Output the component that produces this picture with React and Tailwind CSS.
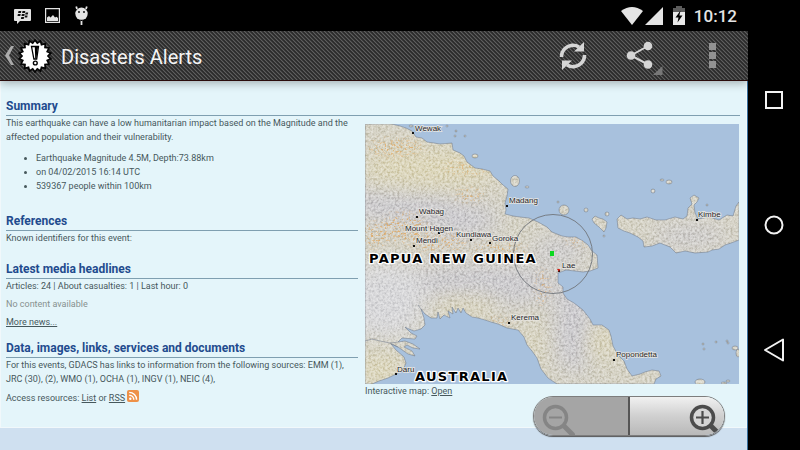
import React from "react";

const mainland =
  "M365 124H392L400 126 406 128 412 131 416 137 422 138 427 142 434 143 440 144 452 143 453 150 460 153 464 156 467 162 475 168 482 169 490 171 493 176 499 181 503 185 508 189 507 196 505 203 506 210 505 214 513 216 520 217 529 218 538 222 547 227 552 232 562 236 568 237 576 237 583 241 588 245 592 251 597 255 598 268 590 271 583 272 575 271 566 270 558 273 558 283 563 287 563 293 567 299 574 303 583 310 590 319 593 325 602 325 609 330 611 336 613 346 618 355 624 361 627 369 632 376 640 374 645 372 652 370 659 371 661 376 656 379 654 384H557L548 378 541 369 537 358 532 351 527 345 524 337 518 330 507 328 498 324 491 322 485 320 478 318 472 317 466 313 463 308 461 313 458 308 456 313 452 307 453 314 448 311 450 318 444 315 440 319 438 312 437 318 431 318 425 314 421 309 424 318 425 325 421 329 414 331 409 329 405 327 411 333 417 336 415 339 402 338 398 342 405 341 413 344 420 349 413 348 407 345 404 347 412 351 415 356 408 354 398 347 391 344 396 350 404 357 406 363 403 370 396 374 388 378 379 381 372 384H365Z";
const newBritain =
  "M617 219L621 215 627 219 633 218 640 219 647 217 656 220 665 220 675 217 683 219 687 216 688 208 692 204 690 198 694 195 699 198 697 202 694 205 695 213 698 219 709 217 719 220 727 215 733 216 736 206 739 202V240L731 243 725 245 719 249 712 250 708 252 695 253 685 251 676 253 670 247 660 243 652 246 644 247 643 241 638 237 630 233 624 231 618 228Z";
const offshore = "M592 219L595 216 599 218 603 219 607 222 606 228 604 232 599 227 594 223Z";
const islands = [
  [475, 156, 3, 2], [456, 131, 1, 1], [455, 136, 1, 1], [465, 136, 1, 1], [447, 126, 1, 1], [411, 126, 2, 1],
  [515, 181, 4.5, 5.5], [527, 187, 2, 1], [558, 202, 1, 1], [564, 210, 5, 5], [586, 210, 2, 2], [607, 214, 2, 2],
  [604, 236, 1, 1], [662, 180, 2, 1], [669, 182, 3, 2], [653, 191, 2, 2],
  [707, 205, 1, 1], [700, 382, 5, 3], [735, 348, 3, 2], [738, 353, 2, 4], [727, 341, 1, 1], [728, 343, 1, 1],
  [704, 349, 1, 1], [703, 344, 1, 1], [716, 342, 1, 1], [724, 383, 3, 1], [728, 381, 2, 1],
];
const towns = [
  ["Wewak", 415, 131, 413, 133], ["Madang", 509, 203, 507, 206], ["Wabag", 419, 214, 417, 217],
  ["Mount Hagen", 405, 231, 439, 233], ["Kundiawa", 456, 237, 471, 240], ["Goroka", 492, 241, 490, 243],
  ["Mendi", 416, 243, 414, 246], ["Kimbe", 698, 217, 697, 220], ["Lae", 562, 268, 559, 271],
  ["Kerema", 511, 320, 509, 323], ["Popondetta", 616, 357, 614, 360], ["Daru", 397, 372, 396, 374],
];
const highlands = [
  [395, 148, 26, 8], [470, 195, 14, 5], [405, 228, 22, 14], [440, 243, 26, 8], [376, 235, 12, 12], [500, 250, 28, 6],
  [543, 287, 5, 18], [500, 323, 14, 3], [470, 168, 26, 5], [580, 240, 14, 4],
];

function ReliefMap() {
  return (
    <svg viewBox="365 124 374 260" className="block w-full" role="img" aria-label="Map of Papua New Guinea">
      <defs>
        <clipPath id="land">
          <path d={mainland} />
          <path d={newBritain} />
          <path d={offshore} />
          {islands.map(([x, y, rx, ry]) => <ellipse key={`${x}-${y}`} cx={x} cy={y} rx={rx} ry={ry} />)}
        </clipPath>
        <filter id="soft" x="-80%" y="-80%" width="260%" height="260%" colorInterpolationFilters="sRGB"><feGaussianBlur stdDeviation="11" /></filter>
        <filter id="relief" x="0" y="0" width="100%" height="100%" colorInterpolationFilters="sRGB">
          <feTurbulence type="fractalNoise" baseFrequency="0.42" numOctaves="3" seed="4" />
          <feColorMatrix values="1.9 0 0 0 -0.42  1.9 0 0 0 -0.42  1.9 0 0 0 -0.42  0 0 0 0 1" />
        </filter>
        <filter id="speckle" x="-10%" y="-10%" width="120%" height="120%" colorInterpolationFilters="sRGB">
          <feTurbulence type="fractalNoise" baseFrequency="0.45" numOctaves="2" seed="11" />
          <feColorMatrix values="0 0 0 0 0.88  0 0 0 0 0.62  0 0 0 0 0.3  7 0 0 0 -3.9" result="n" />
          <feGaussianBlur in="SourceGraphic" stdDeviation="4" result="s" />
          <feComposite in="n" in2="s" operator="in" />
        </filter>
      </defs>
      <rect x="365" y="124" width="374" height="260" fill="#a8c1dd" />
      <g clipPath="url(#land)">
        <rect x="365" y="124" width="374" height="260" fill="#d6d3c6" />
        <g fill="#cccbcf" filter="url(#soft)">
          <ellipse cx="400" cy="205" rx="60" ry="18" />
          <ellipse cx="460" cy="220" rx="40" ry="18" />
          <ellipse cx="480" cy="285" rx="80" ry="22" />
          <ellipse cx="575" cy="325" rx="22" ry="50" />
          <ellipse cx="560" cy="250" rx="30" ry="12" />
          <ellipse cx="690" cy="236" rx="40" ry="10" />
        </g>
        <g fill="#d8d8da" filter="url(#soft)">
          <ellipse cx="385" cy="300" rx="44" ry="40" />
        </g>
        <g fill="#dcd6ba" filter="url(#soft)">
          <ellipse cx="430" cy="168" rx="70" ry="20" />
          <ellipse cx="380" cy="370" rx="26" ry="16" />
          <ellipse cx="465" cy="307" rx="36" ry="9" />
          <ellipse cx="602" cy="342" rx="12" ry="20" />
          <ellipse cx="533" cy="345" rx="6" ry="24" />
        </g>
        <rect x="365" y="124" width="374" height="260" filter="url(#relief)" className="opacity-70 mix-blend-soft-light" />
        <g filter="url(#speckle)" className="opacity-70">
          {highlands.map(([x, y, rx, ry]) => <ellipse key={`${x}-${y}`} cx={x} cy={y} rx={rx} ry={ry} />)}
        </g>
      </g>
      <g fill="none" stroke="#6d7787" strokeWidth=".5">
        <path d={mainland} />
        <path d={newBritain} />
        <path d={offshore} />
        {islands.map(([x, y, rx, ry]) => <ellipse key={`${x}-${y}`} cx={x} cy={y} rx={rx} ry={ry} />)}
        <path d="M365 341L372 339 380 341 390 343 398 342M390 343L398 347M418 305L421 309" />
      </g>
      <circle cx="553" cy="254" r="39.500" fill="none" stroke="#70757a" strokeWidth=".9" />
      {towns.map(([name, x, y, dx, dy]) => (
        <g key={name}>
          <rect x={dx - 1} y={dy - 1} width="2" height="2" fill="#111" />
          <text x={x} y={y} className="font-['Liberation_Sans',sans-serif] text-[8px] [paint-order:stroke]" fill="#25252c" stroke="#e9e7e1" strokeWidth="1.500">{name}</text>
        </g>
      ))}
      <g className="font-['DejaVu_Sans',sans-serif] text-[13px] font-bold tracking-widest [paint-order:stroke]" fill="#000" stroke="#fff" strokeWidth="2.500" strokeLinejoin="round">
        <text x="369" y="263">PAPUA NEW GUINEA</text>
        <text x="415" y="381">AUSTRALIA</text>
      </g>
      <rect x="550" y="251" width="4" height="5" fill="#0bd91f" />
      <path d="M557 269l2 3 1-3z" fill="#d31a10" />
    </svg>
  );
}

function StatusBar() {
  return (
    <div className="flex h-[31px] items-center justify-between bg-black pl-[14px] pr-[11px] text-[#e4e4e4]">
      <div className="flex items-center gap-[14px]">
        <svg width="17" height="17" viewBox="0 0 17 17" className="mt-px" fill="currentColor">
          <path d="M1 1h15q1 0 1 1v10q0 1-1 1H6l-3 3v-3H1q-1 0-1-1V2q0-1 1-1z" />
          <path d="M4.500 3h2.800l-.4 1.900H4.100zM8.500 3h2.800l-.4 1.900H8.100zM3.900 6h2.800l-.4 1.900H3.500zM7.900 6h2.800l-.4 1.900H7.500zM11.600 4.600h2.600l-.4 1.900h-2.600zM11 7.600h2.600l-.4 1.900h-2.600zM7.300 9h2.800l-.4 1.900H6.900z" fill="#111" />
        </svg>
        <svg width="15" height="15" viewBox="0 0 15 15" fill="currentColor">
          <path d="M.6.600h13.800v13.800H.6z" fill="none" stroke="currentColor" strokeWidth="1.200" />
          <path d="M2 13V9.500l2-1.500 1.500 1.500L8 7l2 2.500 1.500-.8L13 10v3z" />
        </svg>
        <svg width="15" height="20" viewBox="0 0 15 20" fill="currentColor" className="mt-px">
          <circle cx="7.500" cy="7.800" r="6.200" />
          <path d="M3 3L2.200.500M12 3l.8-2.500M7.500 14v5" stroke="currentColor" strokeWidth="1.800" />
          <path d="M7.500 13.800v1.200" stroke="#000" strokeWidth="2" />
          <circle cx="5" cy="6" r=".9" fill="#000" /><circle cx="10" cy="6" r=".9" fill="#000" />
        </svg>
      </div>
      <div className="flex items-center">
        <svg width="22" height="18" viewBox="0 0 22 18" fill="currentColor"><path d="M0 4Q11-4 22 4L11 18z" /></svg>
        <svg width="18" height="18" viewBox="0 0 18 18" fill="currentColor" className="ml-0.5"><path d="M18 0v18H0z" /></svg>
        <svg width="12" height="19" viewBox="0 0 12 19" className="ml-[10px]">
          <path d="M3 0h6v2h3v4H0V2h3z" fill="#5c5c5c" /><path d="M0 6h12v13H0z" fill="#e8e8e8" />
          <path d="M7.500 4.500L2.500 11.500h3l-1 5 5-7H6.400z" fill="#000" />
        </svg>
        <span className="ml-[9px] text-[17px] font-medium leading-5">10:12</span>
      </div>
    </div>
  );
}

const burst = Array.from({ length: 36 }, (_, i) => {
  const r = i % 2 ? 13 : 16;
  const a = (i * Math.PI) / 18;
  return `${(17 + r * Math.sin(a)).toFixed(1)},${(17 - r * Math.cos(a)).toFixed(1)}`;
}).join(" ");

function ActionBar() {
  return (
    <header className="relative z-10 flex h-[50px] items-center border-b border-[#2a0b0b] bg-[#2b2b2b] bg-[linear-gradient(45deg,#5e5e5e_4%,#2b2b2b_18%_36%,#5e5e5e_46%_54%,#2b2b2b_68%_86%,#5e5e5e_96%)] bg-[length:4px_4px] pl-[5px] pr-5 shadow-[0_2px_9px_rgba(0,0,0,0.3)]">
      <button aria-label="Back" className="flex items-center">
        <svg width="9" height="19" viewBox="0 0 9 19" fill="#ababab"><path d="M6 0h3L4 9.500l5 9.500H6L0 9.500z" /></svg>
        <svg width="34" height="34" viewBox="0 0 34 34" className="ml-1">
          <polygon points={burst} fill="#fff" stroke="#050505" strokeWidth="1.700" />
          <path d="M13.500 7.500h7l-1.800 12.500h-2.800z" fill="#fff" stroke="#000" strokeWidth="1.300" />
          <path d="M16.800 8h3.200l-1.600 11.500h-1.200z" fill="#000" />
          <circle cx="17.300" cy="24" r="1.900" fill="#fff" stroke="#000" strokeWidth="1.400" />
        </svg>
      </button>
      <h1 className="ml-[9px] flex-1 pt-0.5 text-[20px] leading-6 text-[#f5f5f5]">Disasters Alerts</h1>
      <button aria-label="Refresh">
        <svg width="30" height="30" viewBox="0 0 30 30" fill="none" stroke="#d5d5d5" strokeWidth="3.600">
          <path d="M3.500 16A11.500 11.500 0 0 1 7 7.500 11.500 11.500 0 0 1 21 6M26.500 14A11.500 11.500 0 0 1 23 22.500 11.500 11.500 0 0 1 9 24" />
          <path d="M26 1v9.500H16zM4 29v-9.500h10z" fill="#d5d5d5" stroke="none" />
        </svg>
      </button>
      <button aria-label="Share" className="ml-[37px]">
        <svg width="38" height="38" viewBox="0 0 38 38" fill="#d5d5d5">
          <path d="M23 9L6 18.500 23 27.500" fill="none" stroke="#d5d5d5" strokeWidth="2" />
          <circle cx="23" cy="9" r="4.300" /><circle cx="6" cy="18.500" r="4.300" /><circle cx="23" cy="27.500" r="4.300" />
          <path d="M37.500 29v9.500h-10z" fill="#777" />
        </svg>
      </button>
      <button aria-label="More options" className="ml-[35px]">
        <svg width="30" height="30" viewBox="0 0 30 30" fill="#929292"><path d="M11 2h7v7h-7zM11 11h7v7h-7zM11 20h7v7h-7z" /></svg>
      </button>
    </header>
  );
}

function Heading({ children, className = "" }) {
  return <h2 className={`border-b border-[#7f9fb0] text-[12px] font-bold leading-[18px] text-[#1f4b8e] ${className}`}>{children}</h2>;
}

function Lens({ plus }) {
  return (
    <svg width="34" height="34" viewBox="0 0 34 34" fill="none" stroke={plus ? "#4c4c4c" : "#858585"} className="shrink-0">
      <path d="M22 22l12 12" strokeWidth="5" />
      <circle cx="14.500" cy="14.500" r="11" strokeWidth="3.500" fill={plus ? "#d6d6d6" : "none"} />
      <path d={plus ? "M8 14.500h13M14.500 8v13" : "M8 14.500h13"} strokeWidth="2.200" />
    </svg>
  );
}

function ZoomControls() {
  return (
    <div className="absolute bottom-[14px] right-[22px] flex h-10 w-48 overflow-hidden rounded-full border border-[#7d7d7d] shadow-[0_1px_1px_#555]">
      <button disabled aria-label="Zoom out" className="flex w-24 items-start border-r-2 border-[#555] bg-[#a5a5a5] pl-[7px] pt-[6px]"><Lens /></button>
      <button aria-label="Zoom in" className="flex flex-1 items-start justify-end bg-linear-to-b from-[#f1f1f1] via-[#d0d0d0] via-50% to-[#b9b9b9] pr-0.5 pt-[6px]"><Lens plus /></button>
    </div>
  );
}

export default function App() {
  return (
    <div className="flex min-h-screen bg-black font-[Roboto,sans-serif]">
      <div className="flex min-w-0 flex-1 flex-col">
        <StatusBar />
        <ActionBar />
        <main className="relative flex flex-1 flex-col border-r border-[#39719f] bg-[#cfe0f0] pb-[22px] text-[9px] leading-[14px] text-[#46585c]">
          <div className="flex-1 border-x border-b border-[#f1f8fb] bg-[#e4f5fa] pb-5 pl-[5px] pr-[6px] pt-4">
            <Heading>Summary</Heading>
            <div className="grid grid-cols-[352fr_374fr] gap-[7px] pr-px">
              <section>
                <p>This earthquake can have a low humanitarian impact based on the Magnitude and the affected population and their vulnerability.</p>
                <ul className="mt-[7px] list-disc pl-[30px]">
                  <li>Earthquake Magnitude 4.5M, Depth:73.88km</li>
                  <li>on 04/02/2015 16:14 UTC</li>
                  <li>539367 people within 100km</li>
                </ul>
                <Heading className="mt-[19px]">References</Heading>
                <p>Known identifiers for this event:</p>
                <Heading className="mt-[15px]">Latest media headlines</Heading>
                <p>Articles: 24 | About casualties: 1 | Last hour: 0</p>
                <p className="mt-1 text-[#87918f]">No content available</p>
                <p className="mt-1"><a href="#news" className="underline">More news...</a></p>
                <Heading className="mt-[10px]">Data, images, links, services and documents</Heading>
                <p>For this events, GDACS has links to information from the following sources: EMM (1), JRC (30), (2), WMO (1), OCHA (1), INGV (1), NEIC (4),</p>
                <p className="mt-1 flex items-center gap-0.5">
                  <span>Access resources: <a href="#list" className="underline">List</a> or <a href="#rss" className="underline">RSS</a></span>
                  <svg width="12" height="12" viewBox="0 0 12 12" className="mb-1">
                    <rect width="12" height="12" rx="2" fill="#ee9148" /><circle cx="3.300" cy="8.800" r="1.200" fill="#fff" />
                    <path d="M2.200 5.200a4.600 4.600 0 0 1 4.600 4.600M2.200 2.400a7.400 7.400 0 0 1 7.400 7.400" fill="none" stroke="#fff" strokeWidth="1.400" />
                  </svg>
                </p>
              </section>
              <section className="pt-2">
                <ReliefMap />
                <p>Interactive map: <a href="#map" className="underline">Open</a></p>
              </section>
            </div>
          </div>
          <ZoomControls />
        </main>
      </div>
      <nav aria-label="System" className="flex w-[52px] flex-col items-center justify-center bg-black">
        <button aria-label="Recent apps" className="flex h-[125px] items-center"><svg width="24" height="24" viewBox="0 0 24 24" fill="none" stroke="#f2f2f2" strokeWidth="2"><rect x="4" y="4" width="16" height="16" /></svg></button>
        <button aria-label="Home" className="flex h-[125px] items-center"><svg width="24" height="24" viewBox="0 0 24 24" fill="none" stroke="#f2f2f2" strokeWidth="2"><circle cx="12" cy="12" r="8.500" /></svg></button>
        <button aria-label="Back" className="flex h-[125px] items-center"><svg width="24" height="24" viewBox="0 0 24 24" fill="none" stroke="#f2f2f2" strokeWidth="2" strokeLinejoin="round"><path d="M21 1.500v21L3 12z" /></svg></button>
      </nav>
    </div>
  );
}
